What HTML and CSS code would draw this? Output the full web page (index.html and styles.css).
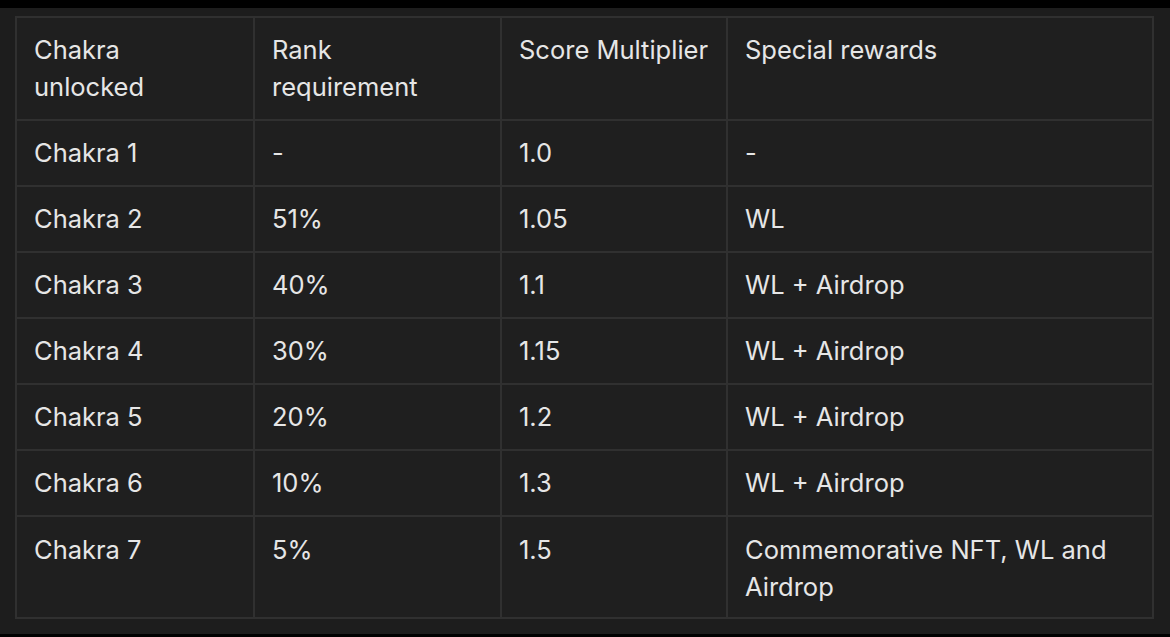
FILE: index.html
```html
<!DOCTYPE html>
<html>
<head>
<meta charset="utf-8">
<link rel="stylesheet" href="styles.css">
</head>
<body>
<div class="topbar"></div>
<main class="frame">
  <table class="chakra">
    <colgroup>
      <col class="c1"><col class="c2"><col class="c3"><col class="c4">
    </colgroup>
    <thead>
      <tr><th>Chakra<br>unlocked</th><th>Rank<br>requirement</th><th>Score Multiplier</th><th>Special rewards</th></tr>
    </thead>
    <tbody>
      <tr><td>Chakra 1</td><td>-</td><td>1.0</td><td>-</td></tr>
      <tr><td>Chakra 2</td><td>51%</td><td>1.05</td><td>WL</td></tr>
      <tr><td>Chakra 3</td><td>40%</td><td>1.1</td><td>WL + Airdrop</td></tr>
      <tr><td>Chakra 4</td><td>30%</td><td>1.15</td><td>WL + Airdrop</td></tr>
      <tr><td>Chakra 5</td><td>20%</td><td>1.2</td><td>WL + Airdrop</td></tr>
      <tr><td>Chakra 6</td><td>10%</td><td>1.3</td><td>WL + Airdrop</td></tr>
      <tr><td>Chakra 7</td><td>5%</td><td>1.5</td><td>Commemorative NFT, WL and<br>Airdrop</td></tr>
    </tbody>
  </table>
</main>
<div class="bottombar"></div>
</body>
</html>
```
FILE: styles.css
```css
html, body {
  margin: 0;
  padding: 0;
  background: #1e1e1e;
  height: 637px;
  overflow: hidden;
}
body {
  display: flex;
  flex-direction: column;
  font-family: Inter, "Liberation Sans", sans-serif;
}
.topbar {
  height: 8px;
  background: #000;
  flex: none;
}
.frame {
  flex: 1;
  padding: 8px 0 0 15px;
  background: #1d1d1d;
}
.bottombar {
  height: 3px;
  background: #000;
  flex: none;
}
.chakra {
  border-collapse: collapse;
  table-layout: fixed;
  width: 1137px;
  background: #1f1f1f;
  color: #e6e6e6;
  font-size: 25.5px;
  line-height: 36px;
}
.c1 { width: 238px; }
.c2 { width: 247px; }
.c3 { width: 226px; }
.c4 { width: 426px; }
.chakra th, .chakra td {
  border: 2px solid #303030;
  padding: 14px 16px 14px 17px;
  text-align: left;
  vertical-align: top;
  font-weight: 400;
}
.chakra th {
  padding-top: 13px;
  padding-bottom: 14px;
  line-height: 37px;
}
.chakra tbody tr:last-child td {
  padding-bottom: 12px;
  line-height: 37px;
}
```
